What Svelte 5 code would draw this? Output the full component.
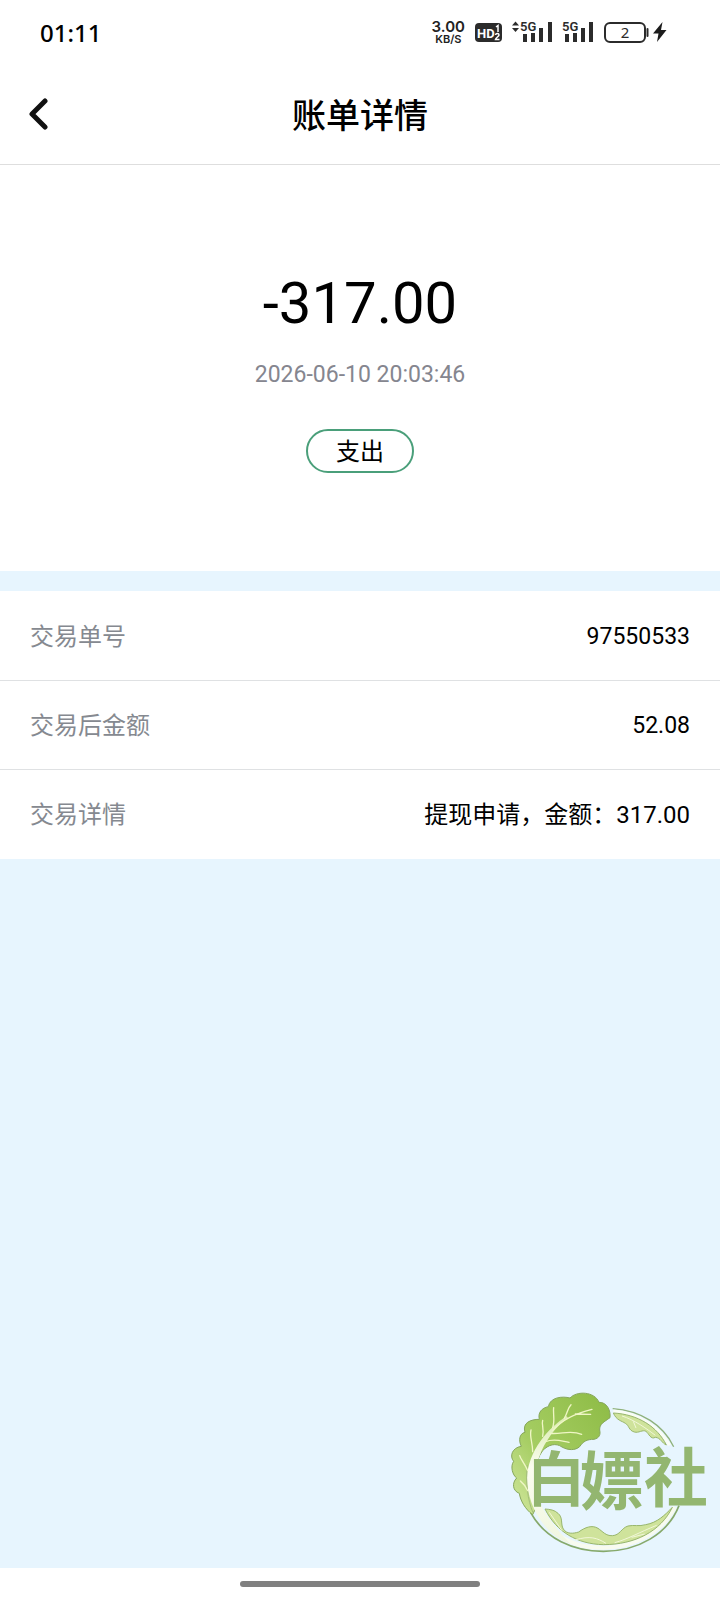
<script lang="ts">
  type Row = {
    label: string;
    value: string;
    numeric?: boolean;
  };

  const amount = "-317.00";
  const time = "2026-06-10 20:03:46";
  const kind = "支出";

  const rows: Row[] = [
    { label: "交易单号", value: "97550533", numeric: true },
    { label: "交易后金额", value: "52.08", numeric: true },
    { label: "交易详情", value: "提现申请，金额：317.00" },
  ];

  function goBack() {
    history.back();
  }
</script>

<div class="page">
  <div class="status-bar">
    <span class="clock">01:11</span>
    <div class="status-icons">
      <div class="speed">
        <span class="speed-value">3.00</span>
        <span class="speed-unit">KB/S</span>
      </div>
      <svg class="hd" width="27" height="19" viewBox="0 0 27 19">
        <rect width="27" height="19" rx="4" fill="#2b2b2b" />
        <text x="2" y="15" font-size="13" font-weight="700" fill="#fff">HD</text>
        <path d="M21 4l2-1.500V9M20.500 12c.3-2 3.500-2 3.500 0 0 1.500-3 2.500-3.500 4.500h4" fill="none" stroke="#fff" stroke-width="1.500" />
      </svg>
      <svg class="signal" width="40" height="28" viewBox="0 -2 40 28">
        <path d="M0 5.5 3.5 1.5 7 5.5zM0 8 3.5 12 7 8z" fill="#2b2b2b" />
        <text x="8" y="11" font-size="13" font-weight="600" fill="#2b2b2b">5G</text>
        <path d="M11 14h4v8h-4zM19 13h4v9h-4zM27 8h4v14h-4zM36 2h4v20h-4z" fill="#2b2b2b" />
      </svg>
      <svg class="signal" width="32" height="28" viewBox="0 -2 32 28">
        <text x="0" y="11" font-size="13" font-weight="600" fill="#2b2b2b">5G</text>
        <path d="M3 14h4v8H3zM11 13h4v9h-4zM19 8h4v14h-4zM27 2h4v20h-4z" fill="#2b2b2b" />
      </svg>
      <div class="power">
        <svg width="45" height="21" viewBox="0 0 45 21">
          <rect x="1" y="1" width="40" height="19" rx="5" fill="none" stroke="#2b2b2b" stroke-width="2" />
          <path d="M43.500 7v7" fill="none" stroke="#2b2b2b" stroke-width="2" stroke-linecap="round" />
          <text x="21" y="16" font-size="15" text-anchor="middle" fill="#2b2b2b">2</text>
        </svg>
        <svg width="14" height="20" viewBox="0 0 14 20">
          <path d="M9.500 0 0 11.500h5.500L4 20l9.500-12H8z" fill="#1c1c1c" />
        </svg>
      </div>
    </div>
  </div>

  <header class="nav">
    <button class="back" aria-label="返回" onclick={goBack}>
      <svg width="20" height="32" viewBox="0 0 20 32">
        <path d="M17 3 4 16 17 29" fill="none" stroke="#111" stroke-width="5" stroke-linecap="round" stroke-linejoin="round" />
      </svg>
    </button>
    <h1>账单详情</h1>
  </header>

  <section class="summary">
    <div class="amount">{amount}</div>
    <time>{time}</time>
    <span class="kind">{kind}</span>
  </section>

  <dl class="rows">
    {#each rows as row}
      <div class="row">
        <dt>{row.label}</dt>
        <dd class:numeric={row.numeric}>{row.value}</dd>
      </div>
    {/each}
  </dl>

  <div class="home-area">
    <div class="home-bar"></div>
  </div>

  <svg class="watermark" viewBox="0 0 660 540">
    <defs>
      <linearGradient id="leaf" x1="1" y1="0" x2="0" y2="1">
        <stop offset="0" stop-color="#8dbb45" />
        <stop offset="0.600" stop-color="#a5cd62" />
        <stop offset="1" stop-color="#d3e8a0" />
      </linearGradient>
      <linearGradient id="stem" x1="0" y1="0" x2="0" y2="1">
        <stop offset="0" stop-color="#d9ebad" />
        <stop offset="0.400" stop-color="#fbfdf0" />
        <stop offset="1" stop-color="#f0f6e0" />
      </linearGradient>
    </defs>

    <!-- outer ring -->
    <path d="M338 86C425 92 490 136 521 200" fill="none" stroke="#8fb17a" stroke-width="4" />
    <path d="M340 93C415 100 475 138 509 196" fill="none" stroke="#fafdf5" stroke-width="9" />
    <path d="M92 398C135 476 220 514 310 514C414 514 504 462 537 377" fill="none" stroke="#86a96b" stroke-width="5" />
    <path d="M170 462C220 497 264 503 310 503C400 503 484 459 524 381" fill="none" stroke="#f8fbef" stroke-width="12" />

    <!-- small leaves inside the ring -->
    <path d="M340 99C414 103 472 140 499 195C486 190 482 173 466 172C452 180 446 160 438 154C428 148 416 160 403 156C385 151 388 136 376 130C365 122 350 122 340 99Z" fill="#cfe39b" stroke="#98b66c" stroke-width="3" />
    <path d="M366 108C402 119 440 146 466 166M400 124L408 144" fill="none" stroke="#f1f7d8" stroke-width="3" />
    <path d="M135 387C150 388 164 390 174 400C190 413 181 432 190 447C200 463 220 461 236 456C255 442 276 434 294 445C308 454 317 468 337 467C360 466 364 444 384 438C402 434 417 440 437 434C472 428 495 405 517 382C482 454 405 494 310 494C232 492 170 457 135 387Z" fill="#cfe39b" stroke="#98b66c" stroke-width="3" />
    <path d="M148 397L186 452M225 480C270 466 292 474 318 490M344 488C382 478 418 457 470 436M395 472L434 462" fill="none" stroke="#f1f7d8" stroke-width="3" />

    <!-- big leaf -->
    <path d="M330 113C333 91 320 66 297 67C284 34 230 32 210 54C188 48 150 51 145 80C125 84 113 98 118 118C92 118 66 128 75 157C58 160 55 182 64 199C36 203 28 229 41 244C30 259 38 286 50 294C35 309 38 333 58 340C61 362 76 388 98 404L116 366C96 310 103 246 127 213C145 193 168 188 186 201C203 211 226 212 239 200C250 184 260 178 282 178C299 174 302 163 299 150C298 132 312 126 330 113Z" fill="url(#leaf)" stroke="#86a75b" stroke-width="3" />
    <path d="M200 108C144 144 84 214 81 294C80 365 127 465 212 492C190 470 132 406 112 350C98 288 108 225 154 163Q172 137 204 114Z" fill="url(#stem)" />
    <path d="M82 255C76 305 83 361 99 398" fill="none" stroke="#a4bd7d" stroke-width="3" />
    <path d="M158 151C186 119 222 101 276 88M193 115C204 96 203 84 213 74M226 102L272 103M150 160C183 164 211 149 245 163M158 143C166 120 158 99 161 83M128 169C133 145 124 134 128 121M98 215C98 188 88 169 93 150M83 272C73 249 62 238 59 227M83 332C74 313 66 307 61 303M137 185C164 174 186 184 207 187" fill="none" stroke="#eff6c5" stroke-width="4" stroke-linecap="round" />

    <g class="brand">
      <text x="80" y="364" font-size="176">白</text>
      <text x="240" y="372" font-size="192">嫖</text>
      <text x="432" y="364" font-size="192">社</text>
    </g>
  </svg>
</div>

<style>
  :global(body) {
    margin: 0;
  }

  .page {
    position: relative;
    display: flex;
    flex-direction: column;
    min-height: 100vh;
    background: #e7f5fe;
    color: #000;
    font-family: Roboto, "Noto Sans CJK SC", sans-serif;
    font-size: 24px;
  }

  .status-bar {
    display: flex;
    align-items: center;
    justify-content: space-between;
    height: 64px;
    padding: 0 53px 0 40px;
    background: #fff;
    font-family: "Noto Sans", sans-serif;
  }

  .clock {
    font-size: 24px;
    font-weight: 500;
  }

  .status-icons {
    display: flex;
    align-items: center;
    gap: 10px;
  }

  .status-icons svg {
    display: block;
  }

  .speed {
    display: flex;
    flex-direction: column;
    align-items: center;
    color: #222;
    font-family: Inter, sans-serif;
    font-weight: 600;
  }

  .speed-value {
    font-size: 15px;
    line-height: 15px;
  }

  .speed-unit {
    font-size: 11px;
    line-height: 11px;
  }

  .hd,
  .signal {
    font-family: Roboto, sans-serif;
  }

  .power {
    display: flex;
    align-items: center;
    gap: 4px;
  }

  .nav {
    display: grid;
    grid-template-columns: 80px 1fr 80px;
    align-items: center;
    height: 100px;
    border-bottom: 1px solid #dedede;
    background: #fff;
  }

  .back {
    display: flex;
    align-items: center;
    height: 80px;
    padding: 0 28px;
    border: 0;
    background: none;
    cursor: pointer;
  }

  h1 {
    margin: 0;
    padding-top: 4px;
    font-size: 34px;
    font-weight: 500;
    line-height: 48px;
    text-align: center;
  }

  .summary {
    display: flex;
    flex-direction: column;
    align-items: center;
    padding: 100px 30px 98px;
    background: #fff;
  }

  .amount {
    font-size: 58px;
    line-height: 76px;
  }

  time {
    margin-top: 18px;
    color: #85868f;
    font-size: 23px;
    line-height: 32px;
  }

  .kind {
    margin-top: 38px;
    padding: 2px 28px 0;
    border: 2px solid #4a9f7a;
    border-radius: 22px;
    line-height: 38px;
  }

  .rows {
    margin: 20px 0 0;
    padding-bottom: 1px;
    background: #fff;
  }

  .row {
    display: flex;
    align-items: center;
    justify-content: space-between;
    box-sizing: border-box;
    height: 89px;
    padding: 2px 30px 0;
    line-height: 32px;
  }

  .row + .row {
    border-top: 1px solid #dfe1e3;
  }

  dt {
    color: #858990;
  }

  dd {
    margin: 0;
  }

  .numeric {
    font-size: 23px;
  }

  .home-area {
    display: flex;
    align-items: center;
    justify-content: center;
    height: 32px;
    margin-top: auto;
    background: #fff;
  }

  .home-bar {
    width: calc(100% / 3);
    height: 6px;
    border-radius: 3px;
    background: #808080;
  }

  .watermark {
    position: absolute;
    right: 0;
    bottom: 40px;
    width: 220px;
    height: 180px;
    pointer-events: none;
  }

  .brand {
    fill: #93b670;
    font-family: "Noto Sans CJK SC", sans-serif;
    font-weight: 700;
  }
</style>
